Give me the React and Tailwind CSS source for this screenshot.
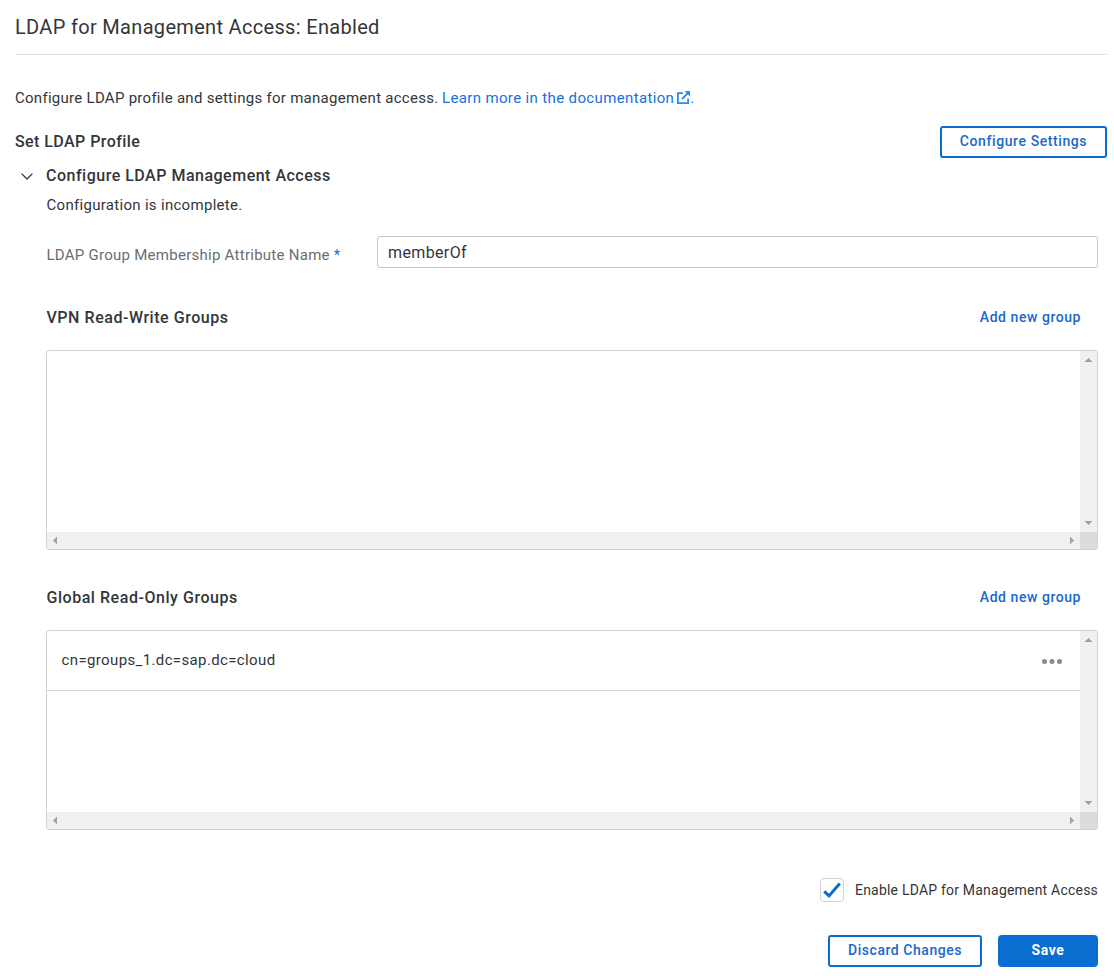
import React from 'react';

function ExternalLinkIcon() {
  return (
    <svg className="-mt-0.5 ml-[3px] h-[13px] w-[13px] shrink-0" viewBox="0 0 13 13" fill="none" stroke="#2f8af0" strokeWidth="1.8">
      <path d="M6 2.1H0.9V12.1H11.1V7.5" />
      <path d="M5 8L11 2" />
      <path d="M7.6 0H13V5.4Z" fill="#2f8af0" stroke="none" />
    </svg>
  );
}

function OutlineButton({ children, className }) {
  return (
    <button
      type="button"
      className={`flex h-8 items-center justify-center rounded-[3px] border-2 border-[#0a6ed1] bg-white pb-0.5 text-sm font-medium text-[#1b68cb] ${className}`}
    >
      {children}
    </button>
  );
}

function Arrow({ d, className }) {
  return (
    <svg className={`shrink-0 ${className}`} viewBox="0 0 8 8" fill="#a3a3a3" shapeRendering="crispEdges">
      <path d={d} />
    </svg>
  );
}

function ScrollBox({ children }) {
  return (
    <div className="grid h-[200px] grid-cols-[1fr_17px] grid-rows-[1fr_17px] overflow-hidden rounded-[3px] border border-[#d1d1d1] bg-white">
      <div>{children}</div>
      <div className="flex flex-col items-start justify-between bg-[#f0f0f0] py-[5px] pl-1">
        <Arrow className="h-2 w-2" d="M0.5 6H7.5V5H6.5V4H5.5V3H4.5V2H3.5V3H2.5V4H1.5V5H0.5Z" />
        <Arrow className="h-2 w-2" d="M0.5 2H7.5V3H6.5V4H5.5V5H4.5V6H3.5V5H2.5V4H1.5V3H0.5Z" />
      </div>
      <div className="flex items-start justify-between bg-[#f0f0f0] px-[5px] pt-1">
        <Arrow className="h-2 w-2" d="M5 0.5V7.5H4V6.5H3V5.5H2V4.5H1V3.5H2V2.5H3V1.5H4V0.5Z" />
        <Arrow className="h-2 w-2" d="M3 0.5V7.5H4V6.5H5V5.5H6V4.5H7V3.5H6V2.5H5V1.5H4V0.5Z" />
      </div>
      <div className="bg-[#dcdcdc]" />
    </div>
  );
}

function GroupSection({ title, children }) {
  return (
    <section>
      <div className="mb-5 flex h-6 items-center justify-between pr-[17px]">
        <h3 className="pl-[0.5px] text-base font-medium tracking-[0.54px]">{title}</h3>
        <a className="pb-0.5 text-sm font-medium tracking-[0.55px] text-[#1b68cb]">Add new group</a>
      </div>
      <ScrollBox>{children}</ScrollBox>
    </section>
  );
}

export default function App() {
  return (
    <main className="h-[976px] overflow-hidden whitespace-nowrap bg-white pl-[15px] pr-[7px] font-['Roboto',sans-serif] text-[#32363a]">
      <header className="flex h-[55px] items-center border-b border-[#e2e2e2]">
        <h1 className="text-xl tracking-[0.32px]">LDAP for Management Access: Enabled</h1>
      </header>

      <p className="mt-[31px] flex h-6 items-center text-[15px] tracking-[0.275px]">
        <span>Configure LDAP profile and settings for management access.</span>
        <a className="ml-[3.5px] flex items-center tracking-[0.36px] text-[#1b70d8]">
          Learn more in the documentation
          <ExternalLinkIcon />
        </a>
        <span className="text-[#1b70d8]">.</span>
      </p>

      <div className="mt-4 flex h-8 items-center justify-between">
        <h2 className="text-base font-medium tracking-[0.43px]">Set LDAP Profile</h2>
        <OutlineButton className="w-[167px] tracking-[0.59px]">Configure Settings</OutlineButton>
      </div>

      <div className="mt-1.5 flex h-6 items-center">
        <svg className="ml-[5.5px] mr-[13.5px] h-[7px] w-3" viewBox="0 0 12 7" fill="none" stroke="#32363a" strokeWidth="1.3">
          <path d="M0.6 0.6L6 6L11.4 0.6" />
        </svg>
        <h2 className="text-base font-medium tracking-[0.5px]">Configure LDAP Management Access</h2>
      </div>

      <div className="pl-[31px] pr-[9px]">
        <p className="mt-[5px] flex h-6 items-center pl-[0.5px] text-[15px] tracking-[0.3px]">Configuration is incomplete.</p>

        <div className="mt-[19px] flex h-8 items-center">
          <label className="w-[331px] pl-[0.5px] pt-[7px] text-[15px] tracking-[0.264px] text-[#6a6d70]">
            LDAP Group Membership Attribute Name <span className="text-[#1b70d8]">*</span>
          </label>
          <div className="flex h-8 flex-1 items-center rounded-[3px] border border-[#c9c9c9] px-2.5 pt-0.5 text-base tracking-[0.37px]">
            memberOf
          </div>
        </div>

        <div className="mt-[38px] flex flex-col gap-9">
          <GroupSection title="VPN Read-Write Groups" />
          <GroupSection title="Global Read-Only Groups">
            <div className="flex h-[60px] items-center justify-between border-b border-[#d1d1d1] pl-[14.5px] pr-[18px]">
              <span className="text-[15px] tracking-[0.37px]">cn=groups_1.dc=sap.dc=cloud</span>
              <svg className="mt-px h-[5px] w-5" viewBox="0 0 20 5" fill="#858b96">
                <circle cx="2.5" cy="2.5" r="2.5" />
                <circle cx="10" cy="2.5" r="2.5" />
                <circle cx="17.5" cy="2.5" r="2.5" />
              </svg>
            </div>
          </GroupSection>
        </div>

        <label className="mt-12 flex h-6 items-center justify-end">
          <span className="mr-[11px] flex h-6 w-6 items-center justify-center rounded border border-[#d1d1d1]">
            <svg className="h-[18px] w-[18px]" viewBox="0 0 18 18" fill="none" stroke="#0a6ed1" strokeWidth="3">
              <path d="M1.2 10.4L6 14.9L16.8 2.6" />
            </svg>
          </span>
          <span className="text-sm tracking-[0.206px]">Enable LDAP for Management Access</span>
        </label>

        <div className="mt-[33px] flex justify-end gap-4">
          <OutlineButton className="w-[154px] tracking-[0.54px]">Discard Changes</OutlineButton>
          <button
            type="button"
            className="flex h-8 w-[100px] items-center justify-center rounded bg-[#0a6ed1] pb-0.5 text-sm font-bold tracking-[0.55px] text-white"
          >
            Save
          </button>
        </div>
      </div>
    </main>
  );
}
